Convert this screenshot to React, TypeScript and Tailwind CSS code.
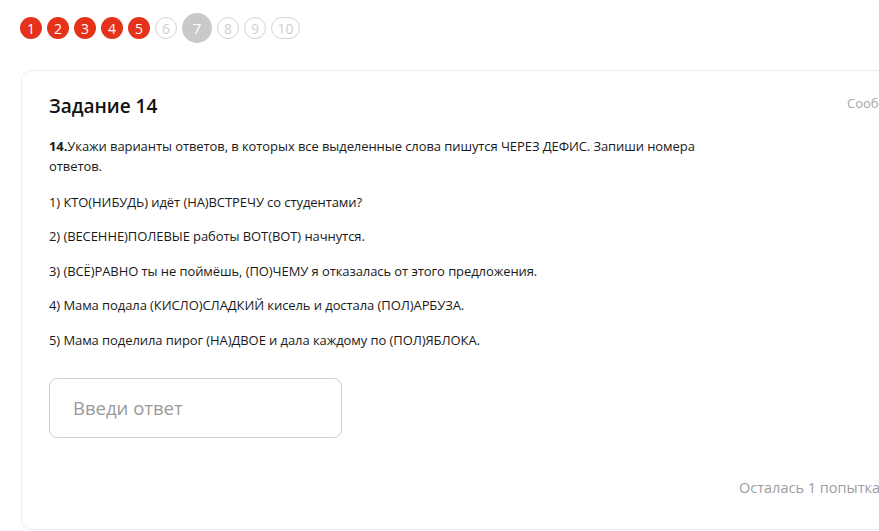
import React from "react";

const steps = [
  { n: 1, state: "done" },
  { n: 2, state: "done" },
  { n: 3, state: "done" },
  { n: 4, state: "done" },
  { n: 5, state: "done" },
  { n: 6, state: "todo" },
  { n: 7, state: "current" },
  { n: 8, state: "todo" },
  { n: 9, state: "todo" },
  { n: 10, state: "todo" },
];

const options = [
  "1) КТО(НИБУДЬ) идёт (НА)ВСТРЕЧУ со студентами?",
  "2) (ВЕСЕННЕ)ПОЛЕВЫЕ работы ВОТ(ВОТ) начнутся.",
  "3) (ВСЁ)РАВНО ты не поймёшь, (ПО)ЧЕМУ я отказалась от этого предложения.",
  "4) Мама подала (КИСЛО)СЛАДКИЙ кисель и достала (ПОЛ)АРБУЗА.",
  "5) Мама поделила пирог (НА)ДВОЕ и дала каждому по (ПОЛ)ЯБЛОКА.",
];

function Step({ n, state }: { n: number; state: string }) {
  if (state === "done") {
    return (
      <div className="flex h-[22px] w-[22px] items-center justify-center rounded-full bg-[#e5321b] text-[14px] text-white">
        {n}
      </div>
    );
  }
  if (state === "current") {
    return (
      <div className="flex h-[30px] w-[30px] items-center justify-center rounded-full bg-[#c9c9c9] text-[15px] text-white">
        {n}
      </div>
    );
  }
  return (
    <div
      className={`flex h-[22px] items-center justify-center rounded-full border border-[#d4d4d4] text-[14px] text-[#cfcfcf] ${
        n === 10 ? "w-[29px]" : "w-[22px]"
      }`}
    >
      {n}
    </div>
  );
}

export default function App() {
  return (
    <div className="h-screen w-screen overflow-hidden bg-white text-[#1a1a1a]" style={{ fontFamily: '"Open Sans", "Noto Sans", sans-serif' }}>
      <div className="w-[1040px] pl-[20px] pt-[13px]">
        <div className="flex h-[30px] items-center gap-[5px]">
          {steps.map((s) => (
            <Step key={s.n} n={s.n} state={s.state} />
          ))}
        </div>

        <div className="ml-[1px] mt-[27px] h-[460px] w-[991px] rounded-[10px] border border-[#ececec] px-[27px] pt-[21px]">
          <div className="flex items-start justify-between">
            <h1 className="text-[19px] font-semibold leading-[28px] text-[#111]">Задание 14</h1>
            <span className="pt-[2px] text-[13px] text-[#a8a8a8]">Сообщить об ошибке</span>
          </div>

          <p className="mt-[16px] max-w-[660px] text-[13px] leading-[20px] tracking-[-0.08px]">
            <b>14.</b>Укажи варианты ответов, в которых все выделенные слова пишутся ЧЕРЕЗ ДЕФИС. Запиши номера
            ответов.
          </p>

          <div className="mt-[15.5px] flex flex-col gap-[14.5px]">
            {options.map((o) => (
              <p key={o} className="text-[13px] leading-[20px] tracking-[-0.08px]">
                {o}
              </p>
            ))}
          </div>

          <div className="mt-[28px] flex h-[60px] w-[293px] items-center rounded-[8px] border border-[#cfcfcf] px-[23px]">
            <span className="text-[18.5px] text-[#9a9a9a]">Введи ответ</span>
          </div>

          <div className="mt-[39px] flex justify-end pr-[104px]">
            <span className="text-[14.5px] text-[#9d9d9d]">Осталась 1 попытка</span>
          </div>
        </div>
      </div>
    </div>
  );
}
